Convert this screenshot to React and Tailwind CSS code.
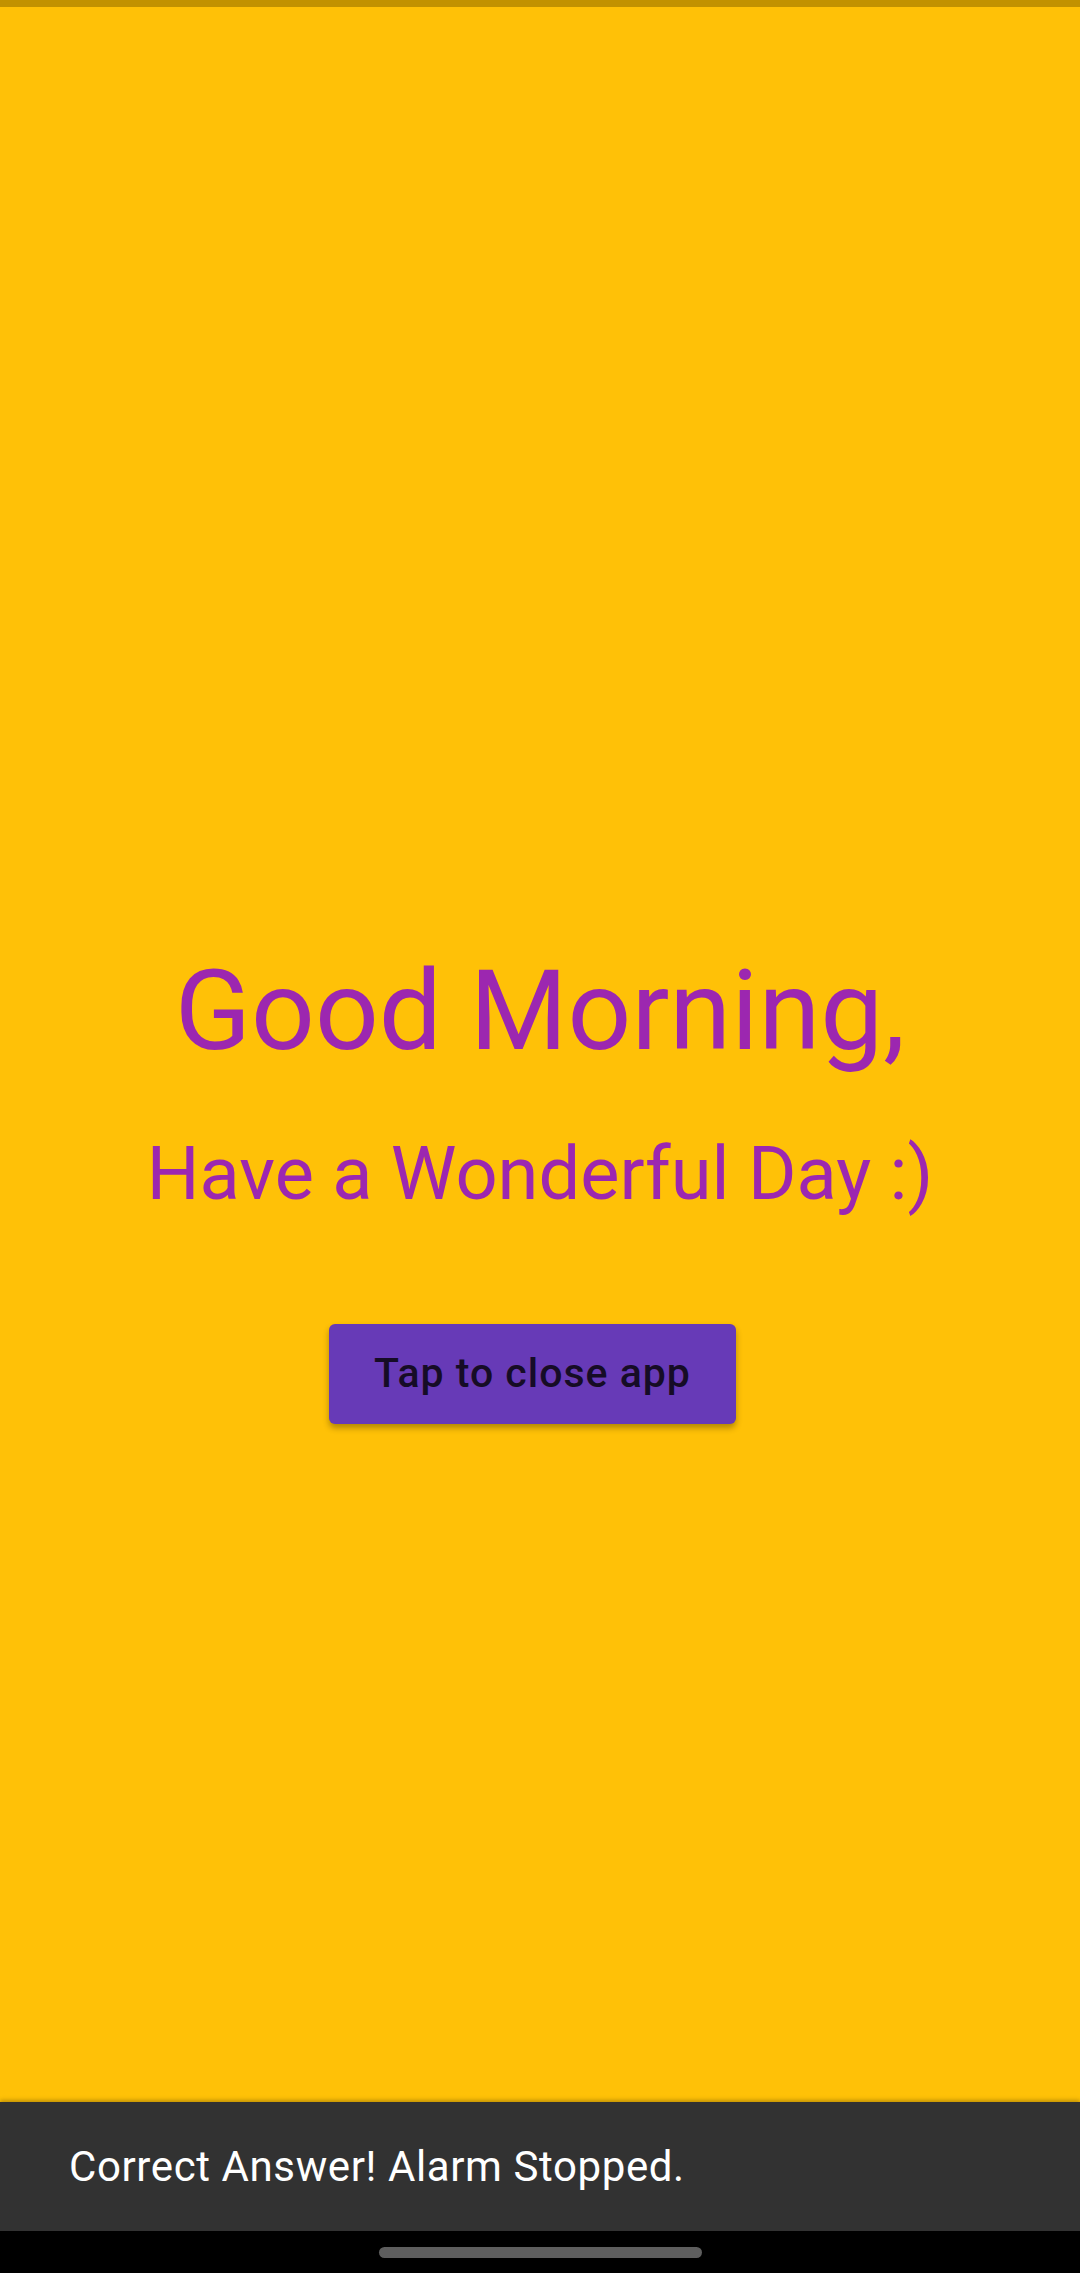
export default function App() {
  return (
    <div className="flex h-[2273px] w-[1080px] flex-col bg-[#ffc107] font-['Roboto',sans-serif]">
      {/* status bar strip */}
      <div className="h-[7px] bg-[#c29200]" />

      <main className="flex flex-1 flex-col items-center">
        <h1 className="mt-[948px] text-[112px] leading-none font-normal text-[#9c27b0]">
          Good Morning,
        </h1>
        <p className="mt-[70px] text-[74px] leading-none text-[#9c27b0]">
          Have a Wonderful Day :)
        </p>
        <button
          type="button"
          className="mt-[113px] mr-[15px] flex h-[100px] w-[407px] items-center justify-center rounded-[6px] bg-[#673ab7] text-[41px] font-medium tracking-[1px] text-[#160c26] shadow-[0_4px_6px_rgba(0,0,0,0.3)]"
        >
          Tap to close app
        </button>
      </main>

      {/* snackbar */}
      <div className="flex h-[129px] items-center bg-[#323232] px-[69px] shadow-[0_-2px_4px_rgba(0,0,0,0.25)]">
        <span className="text-[42px] leading-none tracking-[0.6px] text-white">Correct Answer! Alarm Stopped.</span>
      </div>

      {/* navigation bar */}
      <div className="flex h-[42px] items-center justify-center bg-black">
        <div className="h-[11px] w-[323px] rounded-full bg-[#5e5e5e]" />
      </div>
    </div>
  )
}
